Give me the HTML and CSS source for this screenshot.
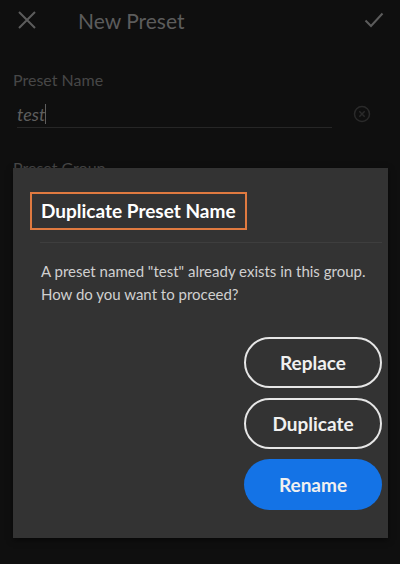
FILE: index.html
```html
<!DOCTYPE html>
<html lang="en">
<head>
    <meta charset="UTF-8">
    <meta name="viewport" content="width=device-width, initial-scale=1.0">
    <title>New Preset</title>
    <link rel="stylesheet" href="styles.css">
</head>
<body>
    <div class="screen">
        <header class="topbar">
            <svg class="icon-close" width="18" height="18" viewBox="0 0 18 18">
                <path d="M1 1 L17 17 M17 1 L1 17" stroke="#5c5c5c" stroke-width="2" fill="none"/>
            </svg>
            <h1>New Preset</h1>
            <svg class="icon-check" width="20" height="16" viewBox="0 0 20 16">
                <path d="M1.5 8.5 L7 14 L18.5 1.5" stroke="#5c5c5c" stroke-width="2" fill="none"/>
            </svg>
        </header>

        <div class="field">
            <label class="field-label">Preset Name</label>
            <div class="field-row">
                <div class="field-input"><span class="value">test</span><span class="caret"></span></div>
                <svg class="icon-clear" width="18" height="18" viewBox="0 0 18 18">
                    <circle cx="9" cy="9" r="7.5" stroke="#2a2a2a" stroke-width="1.5" fill="none"/>
                    <path d="M6.3 6.3 L11.7 11.7 M11.7 6.3 L6.3 11.7" stroke="#2a2a2a" stroke-width="1.5"/>
                </svg>
            </div>
        </div>

        <div class="field">
            <label class="field-label">Preset Group</label>
        </div>

        <!-- duplicate name prompt, sits over the form -->
        <div class="dialog">
            <h2 class="dialog-title">Duplicate Preset Name</h2>
            <div class="divider"></div>
            <p class="dialog-text">A preset named "test" already exists in this group.<br>How do you want to proceed?</p>
            <div class="actions">
                <button class="btn btn-outline">Replace</button>
                <button class="btn btn-outline">Duplicate</button>
                <button class="btn btn-primary">Rename</button>
            </div>
        </div>
    </div>
</body>
</html>
```

FILE: styles.css
```css
body {
    margin: 0;
    background-color: #0f0f0f;
    font-family: 'Lato', sans-serif;
}

.screen {
    position: relative;
    width: 400px;
    height: 564px;
    overflow: hidden;
}

.topbar {
    display: flex;
    align-items: center;
    height: 40px;
    padding: 0 16px 0 18px;
}

.topbar h1 {
    flex: 1;
    margin: 0 0 0 42px;
    font-size: 21px;
    font-weight: 400;
    color: #5c5c5c;
}

.field {
    padding: 0 13px;
}

.field:first-of-type {
    margin-top: 28px;
}

.field-label {
    display: block;
    font-size: 16px;
    color: #474747;
    line-height: 24px;
}

.field-row {
    display: flex;
    align-items: center;
    margin-top: 8px;
    margin-bottom: 28px;
}

.field-input {
    width: 315px;
    margin-left: 4px;
    height: 27px;
    border-bottom: 1px solid #262626;
    display: flex;
    align-items: center;
}

.value {
    font-size: 18px;
    font-style: italic;
    color: #5e5e5e;
}

.caret {
    width: 1px;
    height: 20px;
    background-color: #5e5e5e;
}

.icon-clear {
    margin-left: 21px;
}

.dialog {
    position: absolute;
    left: 13px;
    top: 168px;
    width: 375px;
    height: 370px;
    box-sizing: border-box;
    background-color: #333;
    padding: 24px 6px 0 17px;
    box-shadow: 0 2px 6px rgba(0, 0, 0, 0.5);
}

.dialog-title {
    display: inline-block;
    margin: 0;
    padding: 3px 9px 4px 9px;
    border: 2px solid #e07a40;
    font-size: 19px;
    font-weight: 700;
    color: #fff;
    line-height: 27px;
}

.divider {
    height: 1px;
    background-color: #3e3e3e;
    margin: 12px 0 0 10px;
}

.dialog-text {
    margin: 17px 0 0 11px;
    font-size: 15px;
    line-height: 23px;
    color: #d0d0d0;
}

.actions {
    display: flex;
    flex-direction: column;
    align-items: flex-end;
    gap: 10px;
    margin-top: 31px;
}

.btn {
    width: 138px;
    height: 51px;
    border-radius: 26px;
    font-family: 'Lato', sans-serif;
    font-size: 19px;
    font-weight: 700;
    color: #f0f0f0;
    cursor: pointer;
}

.btn-outline {
    background-color: transparent;
    border: 2px solid #e6e6e6;
}

.btn-primary {
    background-color: #1473e6;
    border: none;
}
```
